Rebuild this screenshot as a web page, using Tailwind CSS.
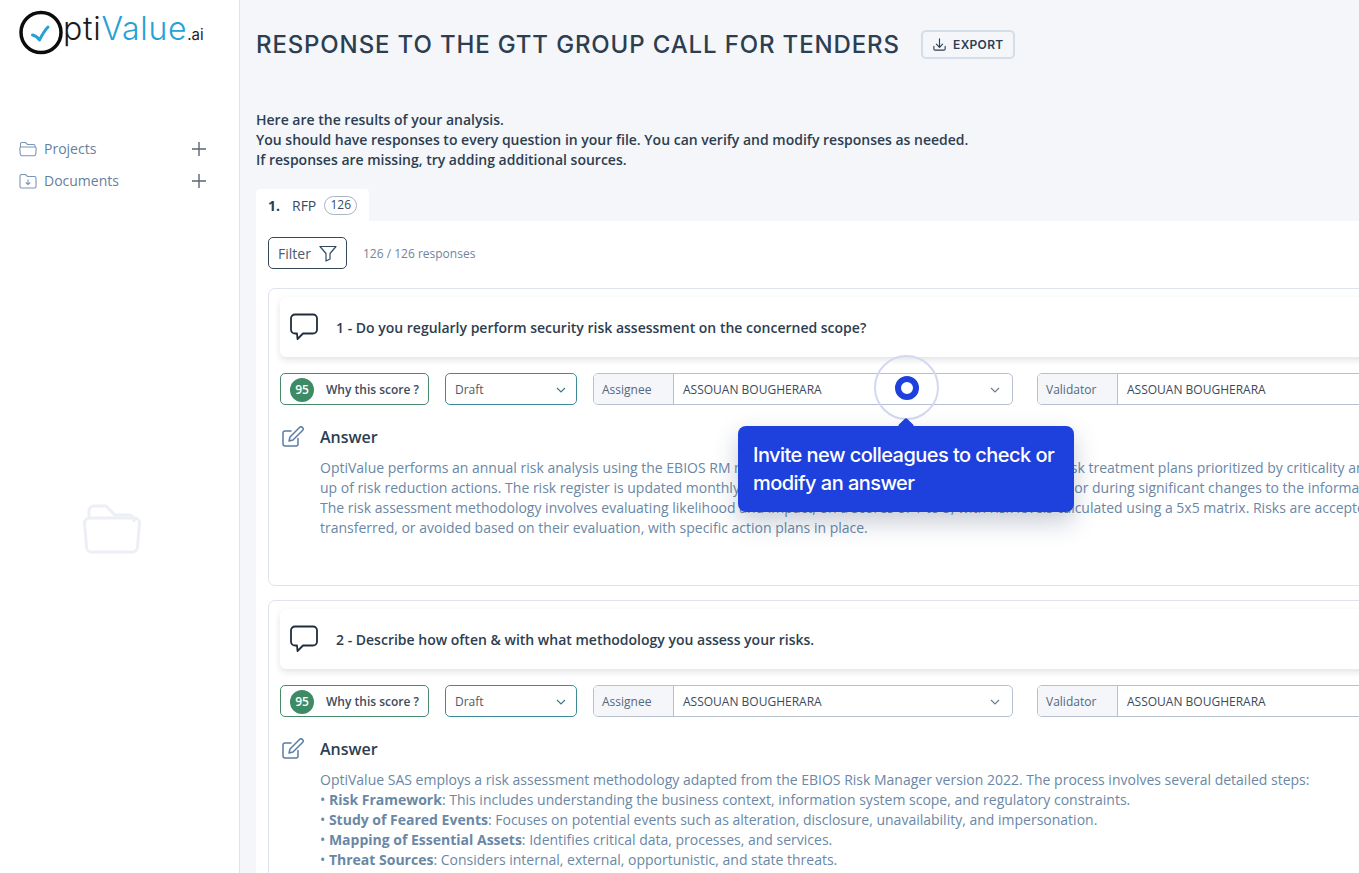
<!DOCTYPE html>
<html>
<head>
<meta charset="utf-8">
<script src="https://cdn.jsdelivr.net/npm/@tailwindcss/browser@4"></script>
</head>
<body class="h-[873px] overflow-hidden bg-[#f4f6fa] font-['Open_Sans',sans-serif]">
<div class="relative flex h-[873px] w-[1359px] overflow-hidden">
  <aside class="flex h-full w-[240px] shrink-0 flex-col border-r border-[#dfe3ea] bg-white">
    <div class="flex h-[60px] items-start pl-[19px] pt-[10px]">
      <svg width="44" height="45" viewBox="0 0 44 45" fill="none" class="shrink-0">
        <circle cx="22" cy="22.5" r="20" stroke="#0c0c0c" stroke-width="3.5"/>
        <path d="M13.500 25c2.500.5 5 2 7 5 2.500-5 5-9.500 8.500-13" stroke="#2a9fd6" stroke-width="3" stroke-linecap="round" stroke-linejoin="round"/>
      </svg>
      <div class="mt-[1px] flex items-baseline font-['Inter',sans-serif] text-[32px] leading-[36px] tracking-[0.7px]">
        <span class="font-light text-[#1a1a1a]">pti</span><span class="font-light text-[#2a9fd6]">Value</span><span class="text-[15px] font-normal tracking-normal text-[#222]">.ai</span>
      </div>
    </div>
    <nav class="mt-[77px] flex flex-col gap-[8px] pl-[19px] pr-[32px] text-[14px] text-[#64809e]">
      <div class="flex h-[24px] items-center">
        <svg width="18" height="16" viewBox="0 0 18 16" fill="none" stroke="#7b96b5" stroke-width="1.1" class="mr-[7px]"><path d="M1.500 6V3a1.500 1.500 0 0 1 1.500-1.500h3.500l2 2h6a1.500 1.500 0 0 1 1.500 1.500v1"/><path d="M.800 7.500A1.500 1.500 0 0 1 2.300 6h13.400a1.500 1.500 0 0 1 1.500 1.500l-.5 6a1.500 1.500 0 0 1-1.500 1.300H2.800a1.500 1.500 0 0 1-1.500-1.300z"/></svg>
        <span class="flex-1 pb-[1px]">Projects</span>
        <svg width="16" height="16" viewBox="0 0 16 16" stroke="#5c6672" stroke-width="1.400"><path d="M8 1v14M1 8h14"/></svg>
      </div>
      <div class="flex h-[24px] items-center">
        <svg width="18" height="16" viewBox="0 0 18 16" fill="none" stroke="#7b96b5" stroke-width="1.100" class="mr-[7px]"><path d="M1 3a1.500 1.500 0 0 1 1.500-1.500h4l2 2h7A1.500 1.500 0 0 1 17 5v8.500a1.500 1.500 0 0 1-1.500 1.500h-13A1.500 1.500 0 0 1 1 13.500z"/><path d="M9 6.500v5M6.800 9.500 9 11.600l2.200-2.100"/></svg>
        <span class="flex-1 pb-[1px]">Documents</span>
        <svg width="16" height="16" viewBox="0 0 16 16" stroke="#5c6672" stroke-width="1.400"><path d="M8 1v14M1 8h14"/></svg>
      </div>
    </nav>
    <div class="ml-[83px] mt-[311px]">
      <svg width="58" height="50" viewBox="0 0 58 50" fill="none" stroke="#eceff5" stroke-width="3" stroke-linejoin="round"><path d="M6 15V7a5 5 0 0 1 5-5h12l9 9h14a5 5 0 0 1 5 5v2"/><path d="M1.500 19a5 5 0 0 1 5-5h45a5 5 0 0 1 5 5l-2 24a5 5 0 0 1-5 5H8.500a5 5 0 0 1-5-5z"/></svg>
    </div>
  </aside>

  <main class="w-[1119px] shrink-0 overflow-hidden pl-[16px]">
    <div class="flex h-[90px] items-center pb-[1px]">
      <h1 class="font-['Inter',sans-serif] text-[24px] font-medium tracking-[0.86px] whitespace-nowrap text-[#2c3e50]">RESPONSE TO THE GTT GROUP CALL FOR TENDERS</h1>
      <button class="ml-[21px] flex h-[29px] w-[94px] items-center justify-center gap-[6px] rounded-[5px] border-2 border-[#d5dde8] font-['Inter',sans-serif] text-[12px] font-semibold tracking-[0.3px] text-[#2c3e50]">
        <svg width="15" height="15" viewBox="0 0 24 24" fill="none" stroke="#2c3e50" stroke-width="1.800" stroke-linecap="round" stroke-linejoin="round"><path d="M12 3v13M7 11.500l5 5 5-5M3 15v4a2 2 0 0 0 2 2h14a2 2 0 0 0 2-2v-4"/></svg>
        EXPORT
      </button>
    </div>
    <div class="mt-[20px] text-[14px] leading-[20px] font-semibold text-[#2c3e50]">
      <p>Here are the results of your analysis.</p>
      <p>You should have responses to every question in your file. You can verify and modify responses as needed.</p>
      <p>If responses are missing, try adding additional sources.</p>
    </div>
    <div class="mt-[19px] flex h-[32px] w-[113px] items-center rounded-t-[4px] bg-white pl-[12px] text-[14px] text-[#3a4a5c]">
      <span class="mr-[12px] font-bold text-[#2c3e50]">1.</span>
      <span class="mr-[8px]">RFP</span>
      <span class="flex h-[19px] w-[33px] items-center justify-center rounded-full border border-[#aab4c2] text-[12px]">126</span>
    </div>
    <div class="w-[1300px] bg-white pl-[12px] pt-[16px]">
      <div class="flex h-[32px] items-center">
        <button class="flex h-[32px] w-[79px] items-center justify-center gap-[8px] rounded-[5px] border border-[#34485e] text-[14px] text-[#4a5a6b]">
          Filter
          <svg width="18" height="17" viewBox="0 0 18 17" fill="none" stroke="#34485e" stroke-width="1.200" stroke-linejoin="round"><path d="M1 1.500h16l-6 7v5.500l-4 2V8.500z"/></svg>
        </button>
        <span class="ml-[16px] pt-[1px] text-[12px] text-[#6f859c]">126 / 126 responses</span>
      </div>

      <section class="mt-[19px] h-[298px] rounded-[7px] border border-[#dfe3ec] pl-[11px] pt-[8px]">
        <div class="flex h-[60px] items-center rounded-[6px] bg-white pl-[9px] shadow-[0_3px_6px_rgba(40,60,90,0.14)]">
          <svg width="30" height="28" viewBox="0 0 30 28" fill="none" stroke="#1f2d3d" stroke-width="1.800" stroke-linejoin="round"><path d="M6 1.500h18a4 4 0 0 1 4 4v11a4 4 0 0 1-4 4H14l-5.500 5.500-.5-5.500H6a4 4 0 0 1-4-4v-11a4 4 0 0 1 4-4z"/></svg>
          <span class="ml-[17px] text-[14px] font-semibold text-[#2c3e50]">1 - Do you regularly perform security risk assessment on the concerned scope?</span>
        </div>
        <div class="mt-[16px] flex h-[32px] items-stretch">
          <div class="flex w-[149px] items-center rounded-[5px] border border-[#4a8a6c] pl-[9px] pt-[1px] text-[12px] font-semibold text-[#3c4c5e]">
            <span class="mr-[12px] flex h-[24px] w-[24px] items-center justify-center rounded-full bg-[#3d8b66] text-white">95</span>Why this score ?
          </div>
          <div class="ml-[16px] flex w-[132px] items-center justify-between rounded-[5px] border border-[#3d8a9a] pl-[9px] pr-[10px] pt-[1px] text-[12px] text-[#4a5a6b]">
            Draft
            <svg width="10" height="6" viewBox="0 0 10 6" fill="none" stroke="#3d7a8a" stroke-width="1.200"><path d="M1 1l4 4 4-4"/></svg>
          </div>
          <div class="ml-[16px] flex w-[420px] overflow-hidden rounded-[5px] border border-[#b7c0ce] text-[12px] text-[#3a4a5c]">
            <span class="flex w-[80px] items-center border-r border-[#b7c0ce] bg-[#f4f6fa] pl-[8px] pt-[1px] text-[#54677b]">Assignee</span>
            <span class="flex flex-1 items-center justify-between pl-[9px] pr-[12px] pt-[1px]">ASSOUAN BOUGHERARA
              <svg width="10" height="6" viewBox="0 0 10 6" fill="none" stroke="#6a7a8a" stroke-width="1.100"><path d="M1 1l4 4 4-4"/></svg></span>
          </div>
          <div class="ml-[24px] flex w-[420px] overflow-hidden rounded-[5px] border border-[#b7c0ce] text-[12px] text-[#3a4a5c]">
            <span class="flex w-[80px] items-center border-r border-[#b7c0ce] bg-[#f4f6fa] pl-[8px] pt-[1px] text-[#54677b]">Validator</span>
            <span class="flex flex-1 items-center pl-[9px] pt-[1px]">ASSOUAN BOUGHERARA</span>
          </div>
        </div>
        <div class="mt-[20px] flex h-[24px] items-center">
          <svg width="24" height="22" viewBox="0 0 24 22" fill="none" stroke="#5a7ea5" stroke-width="1.500" stroke-linecap="round" stroke-linejoin="round" class="ml-[1px]"><path d="M17 12.500V18a2 2 0 0 1-2 2H4a2 2 0 0 1-2-2V7a2 2 0 0 1 2-2h6"/><path d="M9 11l-1 4 4-1L21.500 4.500a1.800 1.800 0 0 0-3-3z"/></svg>
          <span class="ml-[15px] text-[16px] font-semibold text-[#2c3e50]">Answer</span>
        </div>
        <div class="mt-[9px] ml-[40px] w-[1060px] text-[14px] leading-[20px] text-[#6a87a6]">
          <p class="whitespace-nowrap">OptiValue performs an annual risk analysis using the EBIOS RM methodology, which produces risk registers and a risk treatment plans prioritized by criticality and</p>
          <p class="whitespace-nowrap">up of risk reduction actions. The risk register is updated monthly by the security teams, and also reviewed annually, or during significant changes to the information</p>
          <p class="whitespace-nowrap">The risk assessment methodology involves evaluating likelihood and impact, on a scores of 1 to 5, with risk levels calculated using a 5x5 matrix. Risks are accepted,</p>
          <p class="whitespace-nowrap">transferred, or avoided based on their evaluation, with specific action plans in place.</p>
        </div>
      </section>

      <section class="mt-[14px] h-[400px] rounded-[7px] border border-[#dfe3ec] pl-[11px] pt-[8px]">
        <div class="flex h-[60px] items-center rounded-[6px] bg-white pl-[9px] shadow-[0_3px_6px_rgba(40,60,90,0.14)]">
          <svg width="30" height="28" viewBox="0 0 30 28" fill="none" stroke="#1f2d3d" stroke-width="1.800" stroke-linejoin="round"><path d="M6 1.500h18a4 4 0 0 1 4 4v11a4 4 0 0 1-4 4H14l-5.500 5.500-.5-5.500H6a4 4 0 0 1-4-4v-11a4 4 0 0 1 4-4z"/></svg>
          <span class="ml-[17px] text-[14px] font-semibold text-[#2c3e50]">2 - Describe how often &amp; with what methodology you assess your risks.</span>
        </div>
        <div class="mt-[16px] flex h-[32px] items-stretch">
          <div class="flex w-[149px] items-center rounded-[5px] border border-[#4a8a6c] pl-[9px] pt-[1px] text-[12px] font-semibold text-[#3c4c5e]">
            <span class="mr-[12px] flex h-[24px] w-[24px] items-center justify-center rounded-full bg-[#3d8b66] text-white">95</span>Why this score ?
          </div>
          <div class="ml-[16px] flex w-[132px] items-center justify-between rounded-[5px] border border-[#3d8a9a] pl-[9px] pr-[10px] pt-[1px] text-[12px] text-[#4a5a6b]">
            Draft
            <svg width="10" height="6" viewBox="0 0 10 6" fill="none" stroke="#3d7a8a" stroke-width="1.200"><path d="M1 1l4 4 4-4"/></svg>
          </div>
          <div class="ml-[16px] flex w-[420px] overflow-hidden rounded-[5px] border border-[#b7c0ce] text-[12px] text-[#3a4a5c]">
            <span class="flex w-[80px] items-center border-r border-[#b7c0ce] bg-[#f4f6fa] pl-[8px] pt-[1px] text-[#54677b]">Assignee</span>
            <span class="flex flex-1 items-center justify-between pl-[9px] pr-[12px] pt-[1px]">ASSOUAN BOUGHERARA
              <svg width="10" height="6" viewBox="0 0 10 6" fill="none" stroke="#6a7a8a" stroke-width="1.100"><path d="M1 1l4 4 4-4"/></svg></span>
          </div>
          <div class="ml-[24px] flex w-[420px] overflow-hidden rounded-[5px] border border-[#b7c0ce] text-[12px] text-[#3a4a5c]">
            <span class="flex w-[80px] items-center border-r border-[#b7c0ce] bg-[#f4f6fa] pl-[8px] pt-[1px] text-[#54677b]">Validator</span>
            <span class="flex flex-1 items-center pl-[9px] pt-[1px]">ASSOUAN BOUGHERARA</span>
          </div>
        </div>
        <div class="mt-[20px] flex h-[24px] items-center">
          <svg width="24" height="22" viewBox="0 0 24 22" fill="none" stroke="#5a7ea5" stroke-width="1.500" stroke-linecap="round" stroke-linejoin="round" class="ml-[1px]"><path d="M17 12.500V18a2 2 0 0 1-2 2H4a2 2 0 0 1-2-2V7a2 2 0 0 1 2-2h6"/><path d="M9 11l-1 4 4-1L21.500 4.500a1.800 1.800 0 0 0-3-3z"/></svg>
          <span class="ml-[15px] text-[16px] font-semibold text-[#2c3e50]">Answer</span>
        </div>
        <div class="mt-[9px] ml-[40px] w-[1060px] text-[14px] leading-[20px] whitespace-nowrap text-[#6a87a6]">
          <p>OptiValue SAS employs a risk assessment methodology adapted from the EBIOS Risk Manager version 2022. The process involves several detailed steps:</p>
          <p>• <b class="font-bold">Risk Framework</b>: This includes understanding the business context, information system scope, and regulatory constraints.</p>
          <p>• <b class="font-bold">Study of Feared Events</b>: Focuses on potential events such as alteration, disclosure, unavailability, and impersonation.</p>
          <p>• <b class="font-bold">Mapping of Essential Assets</b>: Identifies critical data, processes, and services.</p>
          <p>• <b class="font-bold">Threat Sources</b>: Considers internal, external, opportunistic, and state threats.</p>
        </div>
      </section>
    </div>
  </main>

  <div class="absolute left-[874px] top-[355px] flex h-[65px] w-[65px] items-center justify-center rounded-full border-2 border-[#d3d8f0]">
    <div class="h-[24px] w-[24px] rounded-full border-[6px] border-[#1e40dc] bg-white"></div>
  </div>
  <div class="absolute left-[738px] top-[426px] w-[336px] rounded-[8px] bg-[#1e40dc] px-[15px] py-[15px] font-['Inter',sans-serif] text-[20px] leading-[28px] font-medium tracking-[-0.55px] text-white shadow-[0_10px_25px_rgba(30,50,90,0.25)]">
    <div class="absolute -top-[6px] left-[162px] h-[12px] w-[12px] rotate-45 rounded-[2px] bg-[#1e40dc]"></div>
    <p class="relative">Invite new colleagues to check or modify an answer</p>
  </div>
</div>
</body>
</html>
